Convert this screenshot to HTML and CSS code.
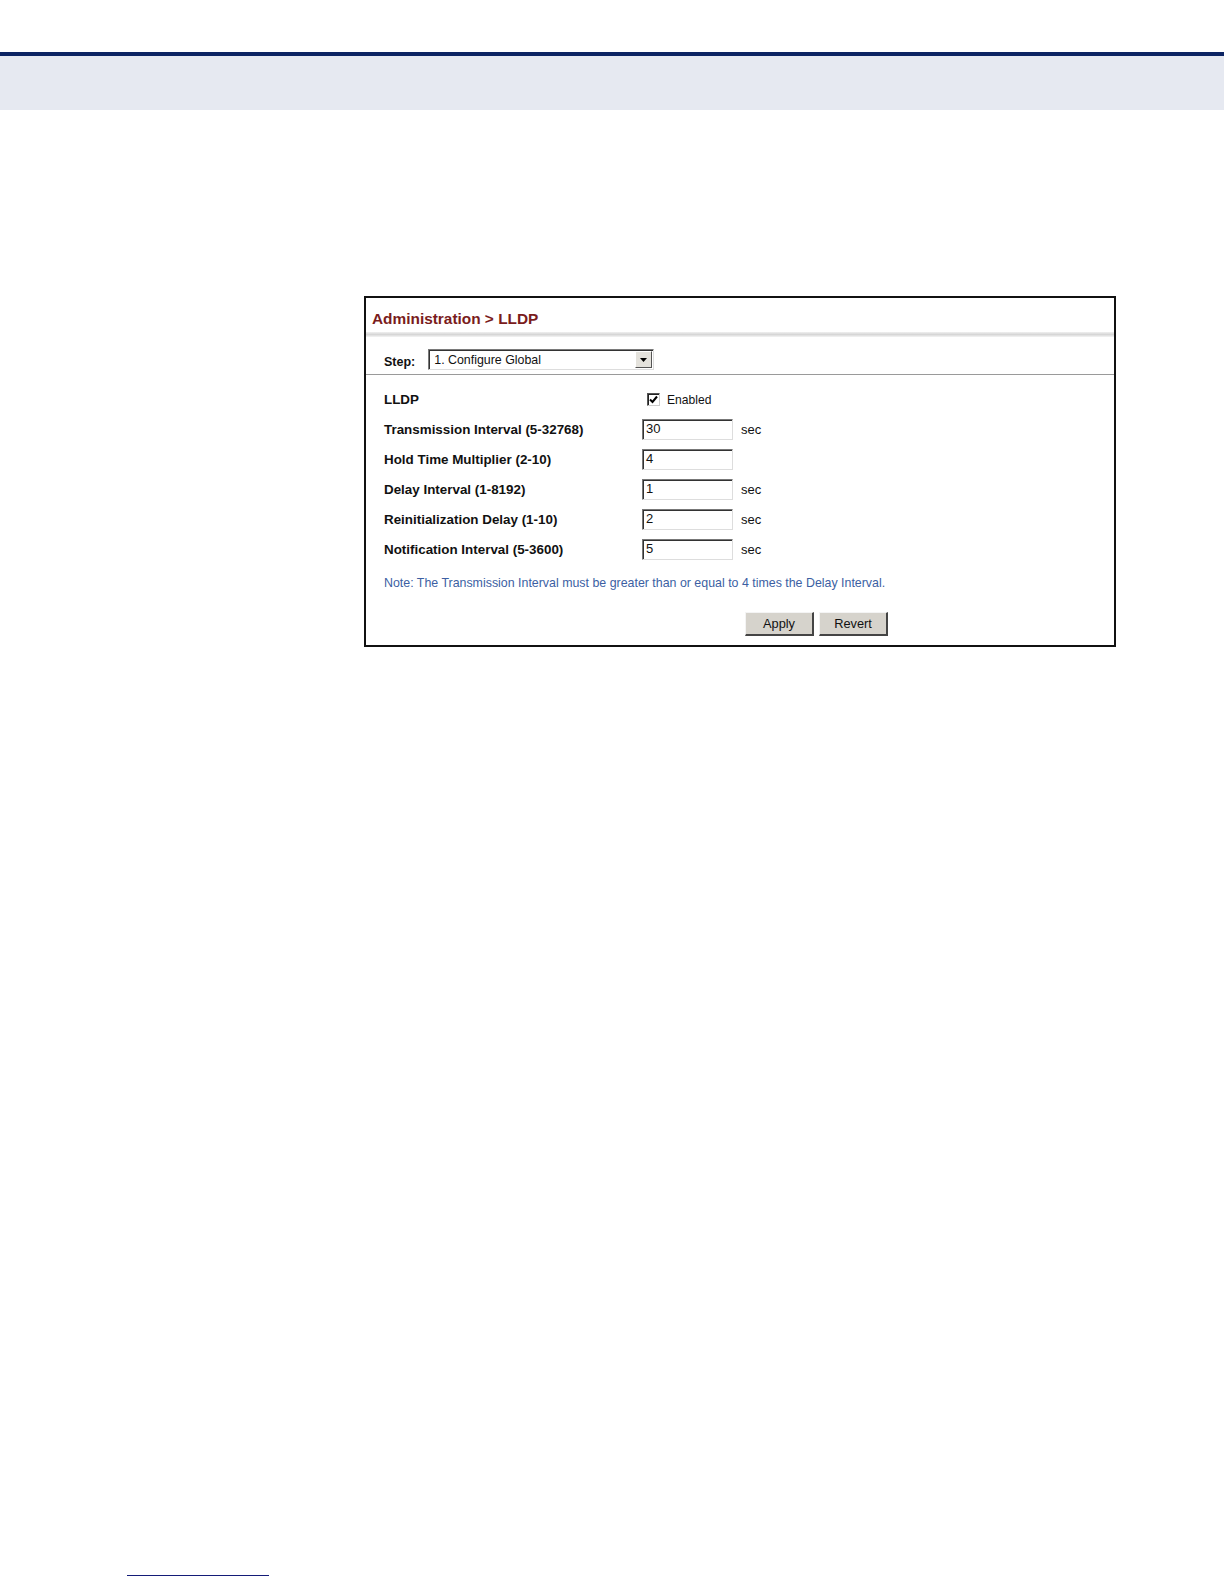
FILE: index.html
```html
<!DOCTYPE html>
<html>
<head>
<meta charset="utf-8">
<link rel="stylesheet" href="styles.css">
</head>
<body>
<div class="top-space"></div>
<div class="top-bar"></div>
<div class="top-band"></div>

<div class="panel">
  <div class="panel-title">Administration &gt; LLDP</div>
  <div class="title-sep"></div>
  <div class="step-row">
    <span class="step-label">Step:</span>
    <div class="select">
      <span class="select-text">1. Configure Global</span>
      <span class="select-btn"><svg width="7" height="4" viewBox="0 0 7 4"><path d="M0 0H7L3.5 4Z" fill="#000"/></svg></span>
    </div>
  </div>
  <div class="step-sep"></div>
  <div class="form">
    <div class="label">LLDP</div>
    <div class="field">
      <span class="check"><svg width="9" height="9" viewBox="0 0 9 9"><path d="M1 4.5L3.5 7L8 1.5" fill="none" stroke="#000" stroke-width="2"/></svg></span>
      <span class="check-text">Enabled</span>
    </div>

    <div class="label">Transmission Interval (5-32768)</div>
    <div class="field"><span class="input">30</span><span class="unit">sec</span></div>

    <div class="label">Hold Time Multiplier (2-10)</div>
    <div class="field"><span class="input">4</span></div>

    <div class="label">Delay Interval (1-8192)</div>
    <div class="field"><span class="input">1</span><span class="unit">sec</span></div>

    <div class="label">Reinitialization Delay (1-10)</div>
    <div class="field"><span class="input">2</span><span class="unit">sec</span></div>

    <div class="label">Notification Interval (5-3600)</div>
    <div class="field"><span class="input">5</span><span class="unit">sec</span></div>
  </div>
  <div class="note">Note: The Transmission Interval must be greater than or equal to 4 times the Delay Interval.</div>
  <div class="buttons">
    <span class="btn">Apply</span>
    <span class="btn">Revert</span>
  </div>
</div>

<div class="foot-line"></div>
</body>
</html>
```

FILE: styles.css
```css
html, body {
  margin: 0;
  padding: 0;
  background: #fff;
  font-family: "Liberation Sans", Arial, sans-serif;
}
.top-space { height: 52px; }
.top-bar { height: 4px; background: #0c2463; }
.top-band { height: 54px; background: #e6e9f1; }

.panel {
  box-sizing: border-box;
  margin: 186px 0 0 364px;
  width: 752px;
  height: 351px;
  border: 2px solid #111;
  background: #fff;
}
.panel-title {
  height: 34px;
  padding-left: 6px;
  line-height: 42px;
  font-size: 15.4px;
  font-weight: bold;
  color: #7a1c1c;
}
.title-sep {
  height: 5px;
  background: linear-gradient(#f0f0f0, #d6d6d6 50%, #f4f4f4);
}
.step-row {
  display: flex;
  align-items: center;
  padding: 12px 0 4px 18px;
}
.step-label {
  font-size: 12.5px;
  font-weight: bold;
  color: #111;
  margin-right: 13px;
  margin-top: 4px;
}
.select {
  box-sizing: border-box;
  width: 226px;
  height: 21px;
  display: flex;
  align-items: center;
  justify-content: space-between;
  border-top: 1px solid #7a7a7a;
  border-left: 1px solid #7a7a7a;
  border-right: 1px solid #ddd;
  border-bottom: 1px solid #ddd;
  box-shadow: inset 1px 1px 0 #333;
}
.select-text {
  font-size: 12.4px;
  color: #111;
  padding-left: 5px;
}
.select-btn {
  box-sizing: border-box;
  width: 17px;
  height: 17px;
  margin-right: 1px;
  display: flex;
  align-items: center;
  justify-content: center;
  background: #e4e2dc;
  border-top: 1px solid #fff;
  border-left: 1px solid #fff;
  border-right: 1px solid #555;
  border-bottom: 1px solid #555;
}
.step-sep {
  height: 1px;
  background: #9a9a9a;
}
.form {
  display: grid;
  grid-template-columns: 258px 1fr;
  grid-auto-rows: 29.9px;
  padding: 10px 0 0 18px;
  align-items: center;
}
.label {
  font-size: 13.4px;
  font-weight: bold;
  color: #111;
}
.field {
  display: flex;
  align-items: center;
}
.check {
  box-sizing: border-box;
  width: 13px;
  height: 13px;
  margin-left: 5px;
  border-top: 1px solid #555;
  border-left: 1px solid #555;
  border-right: 1px solid #ccc;
  border-bottom: 1px solid #ccc;
  box-shadow: inset 1px 1px 0 #222;
  display: flex;
  align-items: center;
  justify-content: center;
}
.check-text {
  font-size: 12.1px;
  color: #111;
  margin-left: 7px;
}
.input {
  box-sizing: border-box;
  width: 91px;
  height: 21px;
  padding-left: 3px;
  font-size: 13px;
  line-height: 18px;
  color: #111;
  border-top: 1px solid #777;
  border-left: 1px solid #777;
  border-right: 1px solid #ddd;
  border-bottom: 1px solid #ddd;
  box-shadow: inset 1px 1px 0 #333;
}
.unit {
  font-size: 13px;
  color: #111;
  margin-left: 8px;
}
.note {
  padding: 12px 0 0 18px;
  font-size: 12.4px;
  color: #3c5fa3;
}
.buttons {
  display: flex;
  gap: 5px;
  padding: 22px 0 0 379px;
}
.btn {
  box-sizing: border-box;
  width: 69px;
  height: 24px;
  display: flex;
  align-items: center;
  justify-content: center;
  font-size: 12.8px;
  color: #111;
  background: #d6d3cc;
  border-top: 1px solid #f4f4f4;
  border-left: 1px solid #f4f4f4;
  border-right: 2px solid #444;
  border-bottom: 2px solid #444;
}
.foot-line {
  margin: 928px 0 0 127px;
  width: 142px;
  height: 1px;
  background: #141c78;
}
```
